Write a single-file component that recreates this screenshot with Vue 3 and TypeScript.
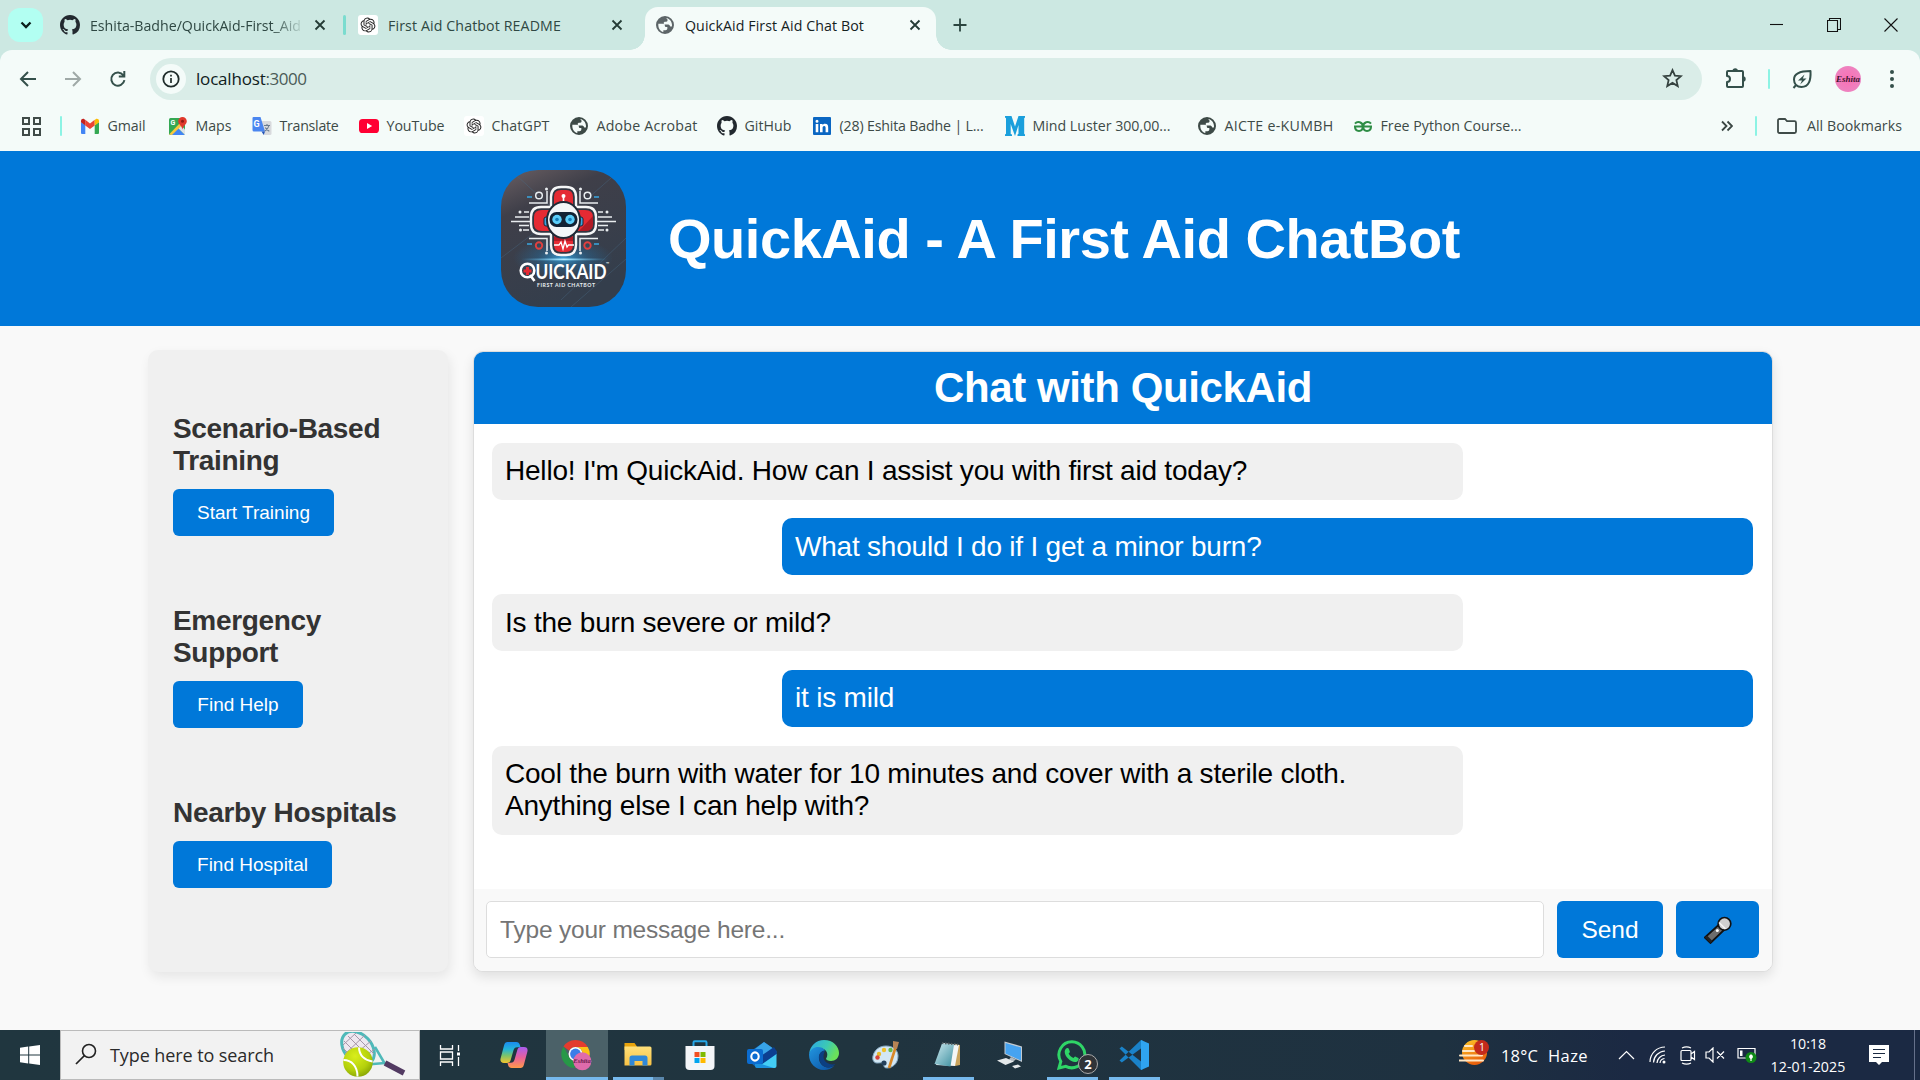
<script setup lang="ts">
import type { Directive } from 'vue'

interface Bookmark { label: string; icon: string; slot: number; text: number; mark?: string }
interface Message { from: 'bot' | 'user'; text: string }
interface Tool { title: string; action: string; wide: number }
interface TaskApp { icon: string; state: '' | 'open' | 'active' | 'stacked' }

// Tracks a label so that it fills the given width.
const vFit: Directive<HTMLElement, number> = {
  mounted(el, binding) {
    const natural = el.getBoundingClientRect().width
    const count = (el.textContent ?? '').trim().length
    if (count > 0) el.style.letterSpacing = `${(binding.value - natural) / count}px`
  },
}

const bookmarks: Bookmark[] = [
  { label: 'Gmail', icon: 'gmail', slot: 88, text: 38 },
  { label: 'Maps', icon: 'maps', slot: 84, text: 36, mark: 'G' },
  { label: 'Translate', icon: 'translate', slot: 107, text: 59, mark: 'G' },
  { label: 'YouTube', icon: 'youtube', slot: 105, text: 58 },
  { label: 'ChatGPT', icon: 'openai', slot: 105, text: 58 },
  { label: 'Adobe Acrobat', icon: 'globe', slot: 148, text: 101 },
  { label: 'GitHub', icon: 'github', slot: 95, text: 47 },
  { label: '(28) Eshita Badhe | L...', icon: 'linkedin', slot: 193, text: 144 },
  { label: 'Mind Luster 300,00...', icon: 'mind', slot: 192, text: 138 },
  { label: 'AICTE e-KUMBH', icon: 'globe', slot: 156, text: 109 },
  { label: 'Free Python Course...', icon: 'gfg', slot: 180, text: 141 },
]

const tools: Tool[] = [
  { title: 'Scenario-Based Training', action: 'Start Training', wide: 161 },
  { title: 'Emergency Support', action: 'Find Help', wide: 130 },
  { title: 'Nearby Hospitals', action: 'Find Hospital', wide: 159 },
]

const messages: Message[] = [
  { from: 'bot', text: "Hello! I'm QuickAid. How can I assist you with first aid today?" },
  { from: 'user', text: 'What should I do if I get a minor burn?' },
  { from: 'bot', text: 'Is the burn severe or mild?' },
  { from: 'user', text: 'it is mild' },
  { from: 'bot', text: 'Cool the burn with water for 10 minutes and cover with a sterile cloth. Anything else I can help with?' },
]

const apps: TaskApp[] = [
  { icon: 'taskview', state: '' },
  { icon: 'copilot', state: '' },
  { icon: 'chrome', state: 'active' },
  { icon: 'explorer', state: 'stacked' },
  { icon: 'store', state: '' },
  { icon: 'outlook', state: '' },
  { icon: 'edge', state: '' },
  { icon: 'paint', state: '' },
  { icon: 'notepad', state: 'open' },
  { icon: 'pc', state: '' },
  { icon: 'whatsapp', state: 'open' },
  { icon: 'vscode', state: 'open' },
]
</script>

<template>
  <div class="screen">
    <svg class="defs" width="0" height="0" aria-hidden="true">
      <defs>
        <linearGradient id="g-logo" x1="0" y1="0" x2=".4" y2="1"><stop offset="0" stop-color="#6a5f63" /><stop offset=".3" stop-color="#3f3f49" /><stop offset="1" stop-color="#343e4c" /></linearGradient>
        <radialGradient id="g-glow"><stop offset="0" stop-color="#39b4f5" stop-opacity=".8" /><stop offset=".5" stop-color="#1f79b5" stop-opacity=".35" /><stop offset="1" stop-color="#1f79b5" stop-opacity="0" /></radialGradient>
        <linearGradient id="g-line"><stop offset="0" stop-color="#4fc3ff" stop-opacity="0" /><stop offset=".5" stop-color="#b5ecff" /><stop offset="1" stop-color="#4fc3ff" stop-opacity="0" /></linearGradient>
        <linearGradient id="g-cpa" x1="0" y1="0" x2="0" y2="1"><stop offset="0" stop-color="#1a8af0" /><stop offset=".35" stop-color="#23b5d8" /><stop offset=".65" stop-color="#7cc46a" /><stop offset="1" stop-color="#f5c52c" /></linearGradient>
        <linearGradient id="g-cpb" x1="0" y1="0" x2="0" y2="1"><stop offset="0" stop-color="#a85cf0" /><stop offset=".5" stop-color="#e8609a" /><stop offset="1" stop-color="#ff9a4a" /></linearGradient>
        <linearGradient id="g-edge" x1="0" y1="0" x2="1" y2=".4"><stop offset="0" stop-color="#2aa5e8" /><stop offset=".6" stop-color="#3cc9b4" /><stop offset="1" stop-color="#6be05a" /></linearGradient>
        <linearGradient id="g-edge2" x1="0" y1="0" x2="1" y2="1"><stop offset="0" stop-color="#2196e0" /><stop offset="1" stop-color="#0b4fa0" /></linearGradient>
        <linearGradient id="g-sun" x1="0" y1="0" x2=".4" y2="1"><stop offset="0" stop-color="#ffc928" /><stop offset="1" stop-color="#e8600c" /></linearGradient>
        <linearGradient id="g-folder" x1="0" y1="0" x2="0" y2="1"><stop offset="0" stop-color="#ffe07a" /><stop offset="1" stop-color="#f8c244" /></linearGradient>
        <radialGradient id="g-ball" cx=".4" cy=".3" r=".8"><stop offset="0" stop-color="#d9ee1c" /><stop offset=".6" stop-color="#b4d00c" /><stop offset="1" stop-color="#7c9a04" /></radialGradient>
        <linearGradient id="g-note" x1="0" y1="0" x2="1" y2="1"><stop offset="0" stop-color="#cdeaf0" /><stop offset="1" stop-color="#3d8f9f" /></linearGradient>
      </defs>

      <symbol id="i-github" viewBox="0 0 16 16"><path fill="#22292f" d="M8 0C3.58 0 0 3.58 0 8c0 3.54 2.29 6.53 5.47 7.59.4.07.55-.17.55-.38 0-.19-.01-.82-.01-1.49-2.01.37-2.53-.49-2.69-.94-.09-.23-.48-.94-.82-1.13-.28-.15-.68-.52-.01-.53.63-.01 1.08.58 1.23.82.72 1.21 1.87.87 2.33.66.07-.52.28-.87.51-1.07-1.78-.2-3.64-.89-3.64-3.95 0-.87.31-1.59.82-2.15-.08-.2-.36-1.02.08-2.12 0 0 .67-.21 2.2.82a7.6 7.6 0 0 1 4 0c1.53-1.04 2.2-.82 2.2-.82.44 1.1.16 1.92.08 2.12.51.56.82 1.27.82 2.15 0 3.07-1.87 3.75-3.65 3.95.29.25.54.73.54 1.48 0 1.07-.01 1.93-.01 2.2 0 .21.15.46.55.38A8.01 8.01 0 0 0 16 8c0-4.42-3.58-8-8-8z" /></symbol>
      <symbol id="i-openai" viewBox="0 0 20 20"><rect width="20" height="20" rx="3" fill="#fff" /><g transform="translate(2.6 2.6) scale(.617)"><path fill="#222" d="M22.28 9.82a5.98 5.98 0 0 0-.51-4.91 6.05 6.05 0 0 0-6.51-2.9A6.07 6.07 0 0 0 4.98 4.18a5.98 5.98 0 0 0-4 2.9 6.05 6.05 0 0 0 .74 7.1 5.98 5.98 0 0 0 .51 4.91 6.05 6.05 0 0 0 6.52 2.9A5.98 5.98 0 0 0 13.26 24a6.06 6.06 0 0 0 5.77-4.21 5.99 5.99 0 0 0 4-2.9 6.06 6.06 0 0 0-.75-7.07zm-9.02 12.61a4.48 4.48 0 0 1-2.88-1.04l.14-.08 4.78-2.76a.8.8 0 0 0 .39-.68v-6.74l2.02 1.17a.07.07 0 0 1 .04.05v5.58a4.5 4.5 0 0 1-4.49 4.5zM3.6 18.3a4.47 4.47 0 0 1-.53-3.01l.14.09 4.78 2.76a.77.77 0 0 0 .78 0l5.84-3.37v2.33a.08.08 0 0 1-.03.06L9.74 19.95a4.5 4.5 0 0 1-6.14-1.65zM2.34 7.9a4.49 4.49 0 0 1 2.37-1.98v5.68a.77.77 0 0 0 .39.68l5.81 3.35-2.02 1.17a.08.08 0 0 1-.07 0L4 14.01A4.5 4.5 0 0 1 2.34 7.9zm16.6 3.86-5.84-3.39 2.02-1.16a.08.08 0 0 1 .07 0l4.83 2.79a4.49 4.49 0 0 1-.68 8.1v-5.68a.79.79 0 0 0-.4-.66zm2.01-3.03-.14-.08-4.77-2.78a.78.78 0 0 0-.79 0L9.41 9.23V6.9a.07.07 0 0 1 .03-.06l4.83-2.79a4.5 4.5 0 0 1 6.68 4.66zM8.3 12.86l-2.02-1.16a.08.08 0 0 1-.03-.06V6.07a4.5 4.5 0 0 1 7.37-3.45l-.14.08-4.78 2.76a.8.8 0 0 0-.39.68zm1.1-2.36 2.6-1.5 2.61 1.5v3l-2.6 1.5-2.61-1.5z" /></g></symbol>
      <symbol id="i-globe" viewBox="0 0 24 24"><path fill="currentColor" fill-rule="evenodd" d="M12 1.2a10.8 10.8 0 1 0 0 21.6 10.8 10.8 0 0 0 0-21.6zM4 10.5h5.2c1.8 0 2.6.9 2.6 2.3 0 1.1.7 1.6 1.8 1.6h1.2v1.8c0 1.4-1 2-2.2 2H10v2.2C6.1 19.600 3.700 16 4 10.500zm9.400-7c3.700.6 7 4 7 8.500 0 .7-.1 1.200-.2 1.700h-1.900c-.7-1.500-1.500-2.200-3.300-2.200h-2.700c-1.200 0-1.900-.7-1.900-1.700 0-1.200.8-1.800 1.900-1.800h1.300c.9 0 1.400-.5 1.400-1.400V5.500z" /></symbol>
      <symbol id="i-gmail" viewBox="0 0 20 20"><path fill="#4285f4" d="M1 17V6l4.300 3.200V18H2a1 1 0 0 1-1-1z" /><path fill="#34a853" d="M19 17V6l-4.300 3.200V18H18a1 1 0 0 0 1-1z" /><path fill="#ea4335" d="M5.300 9.400V3.800L10 7.400l4.700-3.600v5.600L10 13z" /><path fill="#c5221f" d="M1 4.900C1 3 3 2.200 4.400 3.200l.9.7v5.500L1 6.200z" /><path fill="#fbbc04" d="M19 4.900c0-1.900-2-2.700-3.400-1.700l-.9.7v5.500L19 6.200z" /></symbol>
      <symbol id="i-maps" viewBox="0 0 20 20"><rect x="1" y="2" width="16" height="17" rx="1.500" fill="#34a853" /><path d="M2 19 9.500 11.500 17 19z" fill="#4285f4" /><path d="m9.500 11.500 3-3 4.500 5V19z" fill="#dfe3e6" /><path d="M1 18.500 13 6l2 2.200L4 19z" fill="#f8c93c" /><path d="M14.500 1a4.300 4.300 0 0 0-4.300 4.300c0 3.200 3.300 3.800 4.300 8.200 1-4.400 4.300-5 4.300-8.200A4.300 4.300 0 0 0 14.500 1z" fill="#e0392c" /><circle cx="14.500" cy="5.300" r="1.500" fill="#8d1a13" /></symbol>
      <symbol id="i-translate" viewBox="0 0 20 20"><path d="M8 5h10a1.500 1.500 0 0 1 1.500 1.500v11A1.500 1.500 0 0 1 18 19h-6z" fill="#d8dadd" /><path d="M1.500 1h7L13 15.500H2A1.500 1.500 0 0 1 .5 14V2a1 1 0 0 1 1-1z" fill="#4a86f0" /><path d="m9.500 15.500 3.500 0-1.300 3.500z" fill="#2456b8" /><path d="M12 9.500h6M15 8v1.500M17 9.500c-.6 2.600-2.200 4.300-4.200 5.500M13.300 11.500c.9 1.800 2.200 3 4 3.800" stroke="#6a7c90" stroke-width="1.100" fill="none" /></symbol>
      <symbol id="i-youtube" viewBox="0 0 20 20"><rect y="3" width="20" height="14" rx="3.600" fill="#ff0033" /><path d="m8 7 5.200 3L8 13z" fill="#fff" /></symbol>
      <symbol id="i-linkedin" viewBox="0 0 20 20"><rect x="1" y="1" width="18" height="18" rx="1" fill="#0a66c2" /><path fill="#fff" d="M3.700 8h2.600v8.200H3.700zM5 3.800a1.500 1.500 0 1 1 0 3 1.500 1.500 0 0 1 0-3zM8 8h2.500v1.100c.4-.7 1.300-1.300 2.500-1.300 2.600 0 3.200 1.600 3.200 3.900v4.500h-2.600v-4c0-1 0-2.200-1.400-2.200s-1.600 1-1.600 2.100v4.100H8z" /></symbol>
      <symbol id="i-mind" viewBox="0 0 20 20"><path fill="#1a9fdc" d="M0 0h6.500L10 10.500 13.500 0H20v1.500l-.8.700v15.600l.8.700V20h-7.500v-1.500l1-.7V9L10 20 5.700 8v10l1.300.5V20H0v-1.500l1-.7V2.200L0 1.500z" /></symbol>
      <symbol id="i-gfg" viewBox="0 0 20 20"><g fill="none" stroke="#2f8d46" stroke-width="2"><path d="M1 10.600h8.800c0 3-1.400 4.400-3.800 4.400S2 13.500 2 10.600M2 7.700C3.200 6.200 5 5.800 6.800 6.300c2 .6 3 2.200 3 4.300" /><path d="M19 10.600h-8.800c0 3 1.400 4.400 3.800 4.400s4-1.500 4-4.400M18 7.700c-1.200-1.500-3-1.900-4.800-1.400-2 .6-3 2.200-3 4.300" /></g></symbol>

      <symbol id="t-taskview" viewBox="0 0 30 30"><g fill="none" stroke="#fff" stroke-width="1.300"><path d="M5.500 5v4h12V5M5.500 26v-4h12v4M5.500 12h12v7h-12zM23.500 5v6M23.500 17v9" /></g><path fill="#fff" d="M22 12.500h3v3h-3z" /></symbol>
      <symbol id="t-copilot" viewBox="0 0 30 30"><path fill="url(#g-cpa)" d="M8.500 2h8.800c2 0 3 1 3.600 3l.6 2.200h-3.400c-2 0-3 1-3.600 3L11.700 20c-.6 2-1.600 3-3.600 3H5c-3 0-4.200-2-3.300-5L5.100 5.200C5.700 3 6.800 2 8.500 2z" /><path fill="url(#g-cpb)" d="M21.500 28h-8.800c-2 0-3-1-3.600-3l-.6-2.200h3.400c2 0 3-1 3.600-3L18.300 10c.6-2 1.600-3 3.600-3H25c3 0 4.200 2 3.300 5l-3.400 12.800c-.6 2.200-1.700 3.200-3.400 3.200z" /></symbol>
      <symbol id="t-chrome" viewBox="0 0 34 34"><path fill="#e33b2e" d="M16 1a14.500 14.500 0 0 1 12.600 7.200H16a7.300 7.300 0 0 0-6.400 3.800L3.600 7.700A14.500 14.500 0 0 1 16 1z" /><path fill="#fbc116" d="M28.600 8.200A14.500 14.500 0 0 1 16 30l6.300-10.900A7.300 7.300 0 0 0 16 8.200z" /><path fill="#279847" d="M3.600 7.700 9.700 19a7.300 7.300 0 0 0 8.300 3.800L14.500 30A14.500 14.500 0 0 1 3.600 7.700z" /><circle cx="16" cy="15.500" r="7.200" fill="#fff" /><circle cx="16" cy="15.500" r="5.600" fill="#3b7de8" /><circle cx="23" cy="23" r="9.300" fill="#df6bab" /></symbol>
      <symbol id="t-explorer" viewBox="0 0 30 30"><path fill="#e8a30c" d="M1.500 3h10l2.500 3.500V10H1.500z" /><path fill="url(#g-folder)" d="M1.500 6.500H27q1.500 0 1.500 1.500v16q0 1.500-1.500 1.500H1.500z" /><path fill="#2f88d8" d="M6.500 25.500V18q0-2.500 2.500-2.500h13q2.500 0 2.500 2.500v7.500h-5V21h-8v4.500z" /></symbol>
      <symbol id="t-store" viewBox="0 0 30 30"><path d="M8.500 8V2.500q0-1.300 1.300-1.300h10.400q1.300 0 1.300 1.300V8" fill="none" stroke="#27a7e8" stroke-width="2" /><path d="M.5 6h29v20a4 4 0 0 1-4 4h-21a4 4 0 0 1-4-4z" fill="#f3f5f8" /><path fill="#f25022" d="M9.500 12h5v5h-5z" /><path fill="#7fba00" d="M15.500 12h5v5h-5z" /><path fill="#00a4ef" d="M9.500 18h5v5h-5z" /><path fill="#ffb900" d="M15.500 18h5v5h-5z" /></symbol>
      <symbol id="t-outlook" viewBox="0 0 30 30"><path fill="#1267b8" d="M4 11 17 2l12.500 9v4L10 28l-6-5z" /><path fill="#38a4e8" d="m8 9 9-7 10 7-14 8z" /><path fill="#0c3f91" d="m27 7 2.500 4v4L10 27l-2-7z" /><path fill="#43cdf5" d="M29.500 14v12a2 2 0 0 1-2 2H9.500z" /><path fill="#1b91dd" d="M8 22v4q0 2 2 2h17z" /><rect y="9" width="16" height="15" rx="2" fill="#0b6cd0" /><ellipse cx="8" cy="16.500" rx="3.700" ry="4.100" fill="none" stroke="#fff" stroke-width="2.100" /></symbol>
      <symbol id="t-edge" viewBox="0 0 30 30"><path fill="url(#g-edge)" d="M.2 13.500C1 6 7 0 15 0c9 0 15 6.300 15 13 0 5-3.800 8-8 8-3 0-5-1.200-5-2.200 0-.8 1.300-1.500 1.300-4.300 0-3.700-3.300-6.300-7.300-6.300C5.500 8.200 2 11 .2 13.500z" /><path fill="url(#g-edge2)" d="M.1 13.800C1.500 9.500 5 7 9 7c3 0 5.500 1 7.200 3.500-4.700.3-6.700 4.500-6.200 8.500.5 4.700 4.500 8.500 9 8.500 2 0 4-.5 6.500-2C23 28.500 19 30 15 30 6 30-.6 22.500.1 13.800z" /><path fill="#0c3f82" d="M10 18c.4 5 4.500 9.500 9 9.500 2.500 0 5-1 7.500-3.500-3 1-6 .5-9-1.500-2-1.500-3-3.500-3-6 0-2 .5-3.500 1.700-6-4 .3-6.600 3.500-6.200 7.500z" /></symbol>
      <symbol id="t-paint" viewBox="0 0 30 30"><path fill="#d3e7f4" stroke="#86a9c2" d="M15 6c7 0 12 4 12 10 0 8-6 12-11 12-3 0-3-2-4-4s-3-1-6-1-5-3-4-7C3.500 10 8 6 15 6z" /><circle cx="8" cy="14" r="2.200" fill="#e8b828" /><circle cx="13" cy="10" r="2.200" fill="#f0c02c" /><circle cx="19.500" cy="10" r="2.200" fill="#6ab84a" /><circle cx="6.500" cy="17.500" r="2.200" fill="#d8443a" /><circle cx="13" cy="23" r="2.600" fill="#24405c" /><path d="m25 6-7 22" stroke="#d88828" stroke-width="2.600" /><path d="m22 1 6 1-2 7-4-1z" fill="#b88455" /></symbol>
      <symbol id="t-notepad" viewBox="0 0 30 30"><path fill="#c9a35c" d="m22 4 5 1v20l-5 1z" /><path fill="#f4f6f6" d="M10 3 26 5l-4 21-19-1z" /><path fill="url(#g-note)" d="M9 3.500 21 4.500l-3.500 22L1.500 24z" /><path d="m9 3 16 1.500" stroke="#4d5b60" stroke-width="2" stroke-dasharray="1.500 1.500" /></symbol>
      <symbol id="t-pc" viewBox="0 0 30 30"><path fill="#c3cad0" d="M9.500 1.500 27 6.500v15.500L9.500 14z" /><path fill="#46a3f0" d="m10.500 3 15.500 4.500V20.500l-15.500-7z" /><path fill="#b2bac0" d="m16 17 5 2.500-3 2-4-2z" /><path fill="#e4e8ea" d="m2 20.500 9-2.500 8 3.500-8.500 3.500zM17 26l6-1.500 3 2-6 2z" /></symbol>
      <symbol id="t-whatsapp" viewBox="0 0 30 30"><path fill="none" stroke="#2fd567" stroke-width="3" d="M15 1.800A13 13 0 0 0 3.800 21.500L2 28l6.800-1.700A13 13 0 1 0 15 1.800z" /><path fill="#2fd567" d="M10.500 8c.6 0 1 .1 1.300.8l1 2.600c.2.500-.1 1-1.200 2.200 1 2 2.800 3.600 5 4.500 1-1.200 1.300-1.700 2-1.400l2.700 1.300c.7.300.5 3-1.900 3.900-4.500 1.500-12-5-11.700-10.300.1-2 1.500-3.600 2.800-3.600z" /></symbol>
      <symbol id="t-vscode" viewBox="0 0 30 30"><path fill="#1a82c8" d="m.5 8.500 2.300-2L24 23v6l-2 1zM.5 20.500l2.300 2L24 7V1l-2-1z" /><path fill="#2fa4f0" d="M22 0 30 3.500v23L22 30z" /></symbol>
    </svg>

    <header class="browser">
      <div class="tabstrip">
        <button class="tabsearch" aria-label="Search tabs"><svg width="12" height="8" viewBox="0 0 12 8"><path d="m1.500 1.500 4.500 4.500 4.500-4.500" fill="none" stroke="#0b1f1b" stroke-width="2.300" /></svg></button>
        <div class="tab first">
          <svg class="i20"><use href="#i-github" /></svg>
          <span class="clip"><span v-fit="211">Eshita-Badhe/QuickAid-First_Aid</span></span>
          <svg class="x" viewBox="0 0 10 10"><path d="m.5.5 9 9m0-9-9 9" /></svg>
        </div>
        <i class="tabsep"></i>
        <div class="tab second">
          <svg class="i20"><use href="#i-openai" /></svg>
          <span v-fit="173">First Aid Chatbot README</span>
          <svg class="x" viewBox="0 0 10 10"><path d="m.5.5 9 9m0-9-9 9" /></svg>
        </div>
        <div class="tab current">
          <svg class="i20"><use href="#i-globe" /></svg>
          <span v-fit="179">QuickAid First Aid Chat Bot</span>
          <svg class="x" viewBox="0 0 10 10"><path d="m.5.5 9 9m0-9-9 9" /></svg>
        </div>
        <svg class="plus" viewBox="0 0 14 14"><path d="M7 .5v13M.5 7h13" /></svg>
        <div class="winctl">
          <svg viewBox="0 0 14 14"><path d="M0 6.500h13" /></svg>
          <svg viewBox="0 0 14 14"><path d="M.5 2.500h10v11H.5zM2.500 2.500v-2h11v11h-3" /></svg>
          <svg viewBox="0 0 14 14"><path d="m.5.5 13 13m0-13-13 13" /></svg>
        </div>
      </div>

      <div class="toolbar">
        <div class="nav">
          <svg viewBox="0 0 18 18"><path d="M17 9H2m7-7L2 9l7 7" /></svg>
          <svg class="dim" viewBox="0 0 18 18"><path d="M1 9h15M9 2l7 7-7 7" /></svg>
          <svg viewBox="0 0 18 18"><path d="M14.300 5.300A6.600 6.600 0 1 0 15.400 10.200M15.300 1v5.500H9.800" /></svg>
        </div>
        <div class="omnibox">
          <span class="info"><svg width="18" height="18" viewBox="0 0 18 18"><circle cx="9" cy="9" r="7.700" fill="none" stroke="#1f2c2a" stroke-width="1.800" /><path d="M9 8v5M9 4.700v1.700" stroke="#1f2c2a" stroke-width="1.700" /></svg></span>
          <span class="url"><span v-fit="69.500">localhost</span><span v-fit="41" class="port">:3000</span></span>
          <svg class="star" viewBox="0 0 20 20"><path d="m10 2 2.300 5.300 5.700.5-4.300 3.800 1.300 5.600-5-3-5 3 1.300-5.600L2 7.800l5.700-.5z" fill="none" stroke="#35423f" stroke-width="1.700" /></svg>
        </div>
        <svg class="ext" viewBox="0 0 22 22"><path d="M3 4h14q1 0 1 1v14q0 1-1 1H3q-1 0-1-1v-4c4 0 4-6 0-6V5q0-1 1-1z" fill="none" stroke="#34504b" stroke-width="2" stroke-linejoin="round" /><path d="M7.500 4a2.700 2.700 0 0 1 5.400 0zM18 9.300a2.700 2.700 0 0 1 0 5.400z" fill="#34504b" /></svg>
        <i class="bar"></i>
        <svg class="leaf" viewBox="0 0 20 20"><path d="M18.500 2c.5 9-1.500 16-9 16-4.500 0-7.500-3-7.500-7.500C2 4 8 2 18.500 2zM4.500 15.500 1.500 19" fill="none" stroke="#34504b" stroke-width="2" stroke-linejoin="round" /><path d="m12.500 5.500-6.500 6h4l-1.800 4 6.300-6h-3.700z" fill="#34504b" /></svg>
        <span class="avatar">Eshita</span>
        <svg class="dots" viewBox="0 0 6 22"><circle cx="3" cy="4" r="2" /><circle cx="3" cy="11" r="2" /><circle cx="3" cy="18" r="2" /></svg>
      </div>

      <div class="bookmarks">
        <svg class="gridicon" viewBox="0 0 19 19"><path d="M1 1h6v6H1zM12 1h6v6h-6zM1 12h6v6H1zM12 12h6v6h-6z" fill="none" stroke="#404b48" stroke-width="2" /></svg>
        <i class="bar thick"></i>
        <div v-for="b in bookmarks" :key="b.label" class="bm" :style="{ width: b.slot + 'px' }">
          <svg class="i20"><use :href="'#i-' + b.icon" /></svg>
          <b v-if="b.mark" class="mark" :class="b.icon">{{ b.mark }}</b>
          <span v-fit="b.text">{{ b.label }}</span>
        </div>
        <svg class="more" viewBox="0 0 12 12"><path d="m1 1.500 4.500 4.500L1 10.500M6.500 1.500 11 6l-4.500 4.500" fill="none" stroke="#3a4643" stroke-width="1.800" /></svg>
        <i class="bar thick"></i>
        <svg class="folder" viewBox="0 0 20 16"><path d="M1 2.500Q1 1 2.500 1H8l2 2.200h7.500Q19 3.200 19 4.700v8.800q0 1.500-1.500 1.500h-15Q1 15 1 13.500z" fill="none" stroke="#3f4b48" stroke-width="1.800" /></svg>
        <span v-fit="95">All Bookmarks</span>
      </div>
    </header>

    <section class="hero">
      <svg class="logo" viewBox="0 0 125 137" role="img">
        <clipPath id="c-logo"><rect width="125" height="137" rx="37" /></clipPath>
        <g clip-path="url(#c-logo)">
          <rect width="125" height="137" fill="url(#g-logo)" />
          <path d="M0 88 50 50M60 130l65-62M70 137l55-48M85 30 110 8M15 5l35 32" stroke="#4a6d88" stroke-width=".7" opacity=".55" />
          <ellipse cx="62" cy="88" rx="50" ry="20" fill="url(#g-glow)" />
          <g fill="none" stroke="#e9edf0" stroke-width="1.500">
            <path d="M28 33h18V21M97 33H79V21M28 68.500h18V81M97 68.500H79V81" />
            <path d="M14 47h14M10 51.500h20M18 55.500h10M22 60h6M23 42h5M97 47h14M95 51.500h20M97 55.500h10M97 60h6M97 42h5" />
            <circle cx="38" cy="25.500" r="3.300" /><circle cx="86.500" cy="25.500" r="3.300" />
          </g>
          <g fill="#e9edf0"><circle cx="45.500" cy="19" r="1.500" /><circle cx="79.500" cy="19" r="1.500" /><circle cx="45.500" cy="83" r="1.500" /><circle cx="79.500" cy="83" r="1.500" /><circle cx="19" cy="42" r="1.500" /><circle cx="19.500" cy="60" r="1.500" /><circle cx="106" cy="42" r="1.500" /><circle cx="106" cy="60" r="1.500" /></g>
          <path d="M26 27h5M93 27h5M26 74h5M93 74h5" stroke="#3aa6e0" stroke-width="1.600" />
          <circle cx="38" cy="75.500" r="3.200" fill="none" stroke="#e0403f" stroke-width="1.900" /><circle cx="86.500" cy="75.500" r="3.200" fill="none" stroke="#e0403f" stroke-width="1.900" />
          <path d="M60 17h5q10 0 10 10v10h10q10 0 10 10v7q0 10-10 10H75v11q0 10-10 10h-5q-10 0-10-10V64H40q-10 0-10-10v-7q0-10 10-10h10V27q0-10 10-10z" fill="#303642" stroke="#f5f6f7" stroke-width="2.400" />
          <path d="M60 20h5q7 0 7 7v13h12q8 0 8 7v7q0 7-8 7H72v14q0 7-7 7h-5q-7 0-7-7V61H41q-8 0-8-7v-7q0-7 8-7h12V27q0-7 7-7z" fill="#e52a33" />
          <path d="M78 61h7q7 0 7-7v-8zM53 67h19v4H53z" fill="#9d1522" opacity=".75" />
          <path d="M62.500 34v-8" stroke="#fff" stroke-width="1.600" /><circle cx="62.500" cy="26" r="2" fill="#fff" />
          <rect x="43" y="47" width="5" height="9" rx="2" fill="#3fa3dd" stroke="#17283a" /><rect x="77" y="47" width="5" height="9" rx="2" fill="#3fa3dd" stroke="#17283a" />
          <ellipse cx="62.500" cy="50" rx="17.500" ry="19" fill="#202936" />
          <ellipse cx="62.500" cy="50" rx="15.500" ry="17" fill="#f4f6f8" />
          <rect x="48.500" y="42" width="28" height="15" rx="7" fill="#132234" />
          <circle cx="56" cy="49.500" r="4.700" fill="#5ccdf8" /><circle cx="69" cy="49.500" r="4.700" fill="#5ccdf8" /><circle cx="56" cy="49.500" r="1.800" fill="#167fba" /><circle cx="69" cy="49.500" r="1.800" fill="#167fba" />
          <path d="M53 75h5l2-3 2 7 2-8 2 6 1.500-2H73" fill="none" stroke="#fff" stroke-width="1.300" />
          <rect x="20" y="88.500" width="86" height="1.800" fill="url(#g-line)" />
          <circle cx="26.500" cy="100.500" r="6.800" fill="none" stroke="#fff" stroke-width="2.600" /><path d="m29 105 4.500 6" stroke="#fff" stroke-width="2.600" /><path d="M26.500 97v8M22.500 101h8" stroke="#e52a33" stroke-width="3" />
          <text x="34.500" y="109" textLength="71" lengthAdjust="spacingAndGlyphs" class="brand">UICKAID</text>
          <text x="105" y="95" class="tm">™</text>
          <text x="36" y="116.500" textLength="58" class="tag">FIRST AID CHATBOT</text>
        </g>
      </svg>
      <h1><span v-fit="792">QuickAid - A First Aid ChatBot</span></h1>
    </section>

    <main class="page">
      <aside class="side">
        <section v-for="t in tools" :key="t.title" class="tool">
          <h3>{{ t.title }}</h3>
          <button :style="{ width: t.wide + 'px' }">{{ t.action }}</button>
        </section>
      </aside>

      <section class="chat">
        <h2><span v-fit="378">Chat with QuickAid</span></h2>
        <div class="log">
          <p v-for="(m, i) in messages" :key="i" class="msg" :class="m.from">{{ m.text }}</p>
        </div>
        <div class="compose">
          <input type="text" placeholder="Type your message here..." />
          <button class="send">Send</button>
          <button class="mic" aria-label="Voice input">
            <svg width="28" height="28" viewBox="0 0 28 28"><path d="M14 9.500 19.500 14.500 6.500 27 .8 21.500z" fill="#6d6d6d" stroke="#111" stroke-width="1.800" /><path d="m3 19.500 5.500 5.500-2 2L.8 21.500z" fill="#222" /><circle cx="20.500" cy="7.800" r="6.300" fill="#cfcfcf" stroke="#111" stroke-width="1.700" /><path d="m15 6.500 6.500 6.500" stroke="#f4f4f4" stroke-width="1.600" /><circle cx="13.300" cy="14.500" r="1.500" fill="#fff" /></svg>
          </button>
        </div>
      </section>
    </main>

    <footer class="taskbar">
      <div class="start"><svg width="20" height="20" viewBox="0 0 20 20" fill="#fff"><path d="M0 2.800 8.200 1.600v7.900H0zM9.200 1.500 20 0v9.500H9.200zM0 10.500h8.200v7.900L0 17.200zM9.200 10.500H20V20L9.200 18.500z" /></svg></div>
      <div class="search">
        <svg class="glass" viewBox="0 0 22 22"><circle cx="14" cy="8" r="6.500" fill="none" stroke="#222" stroke-width="1.600" /><path d="m9.500 12.500-8.500 8.500" stroke="#222" stroke-width="1.700" /></svg>
        <span v-fit="164">Type here to search</span>
        <svg class="racket" viewBox="0 0 68 46">
          <ellipse cx="19" cy="16" rx="13.500" ry="19" transform="rotate(-43 19 16)" fill="#eee8f0" stroke="#4fb9b9" stroke-width="3" />
          <path d="m5 9 22 22M9 4l23 23M15 2l20 20M4 16l14 14M6 22 26 3M9 28 32 9M14 32 36 17M4 13 17 1" stroke="#a596a8" stroke-width="1" />
          <path d="M36 15 46 32M22 33l24-2" stroke="#4fb9b9" stroke-width="2.500" /><path d="m46 31 19 10" stroke="#523a62" stroke-width="5.500" />
          <circle cx="19" cy="30" r="14.800" fill="url(#g-ball)" /><path d="M20 15.500c0 8 6 13 13.500 14M4.500 28c8 0 14 6 14 16.500" fill="none" stroke="#fff" stroke-width="2" />
        </svg>
      </div>
      <div class="apps">
        <div v-for="a in apps" :key="a.icon" class="app" :class="a.state">
          <svg width="30" height="30"><use :href="'#t-' + a.icon" /></svg>
          <b v-if="a.icon === 'whatsapp'" class="count">2</b>
          <i v-if="a.icon === 'chrome'" class="who">Eshita</i>
        </div>
      </div>
      <div class="tray">
        <svg class="sun" viewBox="0 0 30 26"><circle cx="15.500" cy="12.500" r="12.500" fill="url(#g-sun)" /><path d="M6 6h7M4 11h11M1 15.500h22M0 20.500h24" stroke="#ffe6c4" stroke-width="2" stroke-linecap="round" /><circle cx="22.500" cy="7.500" r="7.500" fill="#c42b1c" /><text x="20" y="11.300" font-size="10.500" font-family="Open Sans, sans-serif" fill="#fff">1</text></svg>
        <span class="deg"><span v-fit="37">18°C</span></span>
        <span class="sky"><span v-fit="40">Haze</span></span>
        <svg class="chev" viewBox="0 0 17 10"><path d="m1 9 7.500-7.500L16 9" /></svg>
        <svg class="wifi" viewBox="0 0 17 18"><path d="M1 16A15 15 0 0 1 16 1M4.500 16.500A12 12 0 0 1 16 5M8 17A8.500 8.500 0 0 1 16 9M11 17a5 5 0 0 1 4.500-4.500" /><circle cx="15" cy="16" r="1.500" fill="#fff" stroke="none" /></svg>
        <svg class="meet" viewBox="0 0 16 19"><path d="M2 4.500h8q1 0 1 1v8q0 1-1 1H2q-1 0-1-1v-8q0-1 1-1zM11 8l3.500-2.500v8L11 11M2 2q4.500-2.400 9 0M2 17q4.500 2.400 9 0" /></svg>
        <svg class="vol" viewBox="0 0 20 16"><path d="M1 5h3l4-4v14l-4-4H1zM12 4.500l7 7m0-7-7 7" /></svg>
        <svg class="bat" viewBox="0 0 20 16"><path d="M1 1.500h17v9.500H1z" /><path d="M3 3.500h2.500V9H3z" class="cell" /><circle cx="14" cy="10.500" r="5.500" fill="#0f8a16" stroke="none" /><path d="M14 14v-3" /><path d="M14 12c-2.800-1.200-2.300-3.400 0-4.700 2.300 1.300 2.800 3.500 0 4.700z" class="cell" /></svg>
        <div class="clock"><span v-fit="36">10:18</span><span v-fit="75">12-01-2025</span></div>
        <svg class="note" viewBox="0 0 20 20"><path d="M0 0h20v17h-7l-3 3-3-3H0z" fill="#fff" /><path d="M4 4.500h12M4 8.500h12M4 12.500h8" stroke="#1b2a42" stroke-width="1.300" /></svg>
        <i class="peek"></i>
      </div>
    </footer>
  </div>
</template>

<style>
body { margin: 0; overflow: hidden; }
</style>

<style scoped>
* { box-sizing: border-box; }
.screen { width: 1920px; height: 1080px; display: flex; flex-direction: column; background: #f9f9f9; font-family: "Liberation Sans", Arial, sans-serif; overflow: hidden; position: relative; }
.defs { position: absolute; }
svg { flex: none; display: block; }
span { white-space: nowrap; }
.i20 { width: 20px; height: 20px; }
.browser { height: 151px; flex: none; background: #cce8e2; font: 14.2px/20px "Open Sans", "Noto Sans", sans-serif; color: #3d4a47; }
.tabstrip { height: 50px; display: flex; align-items: center; padding-left: 8px; }
.tabsearch { width: 35px; height: 34px; border: 0; border-radius: 12px; padding: 0; background: #b2fff2; display: grid; place-items: center; }
.tab { display: flex; align-items: center; height: 43px; color: #2f4843; }
.tab > span { padding-top: 1px; }
.tab .x { margin-left: auto; }
.x { width: 10px; height: 10px; overflow: visible; }
.x path { fill: none; stroke: #243b36; stroke-width: 1.800; }
.tab .i20 { margin-right: 10px; }
.first { margin-left: 17px; width: 265px; }
.clip { width: 212px; mask-image: linear-gradient(90deg, #000 86%, rgba(0, 0, 0, .1)); }
.tabsep { width: 3px; height: 20px; margin: 0 12px 0 18px; background: #7bdccf; border-radius: 2px; }
.second { width: 264px; }
.current { position: relative; align-self: flex-end; width: 291px; height: 43px; margin-left: 23px; padding: 0 16px 7px 10px; background: #f4fbf9; border-radius: 13px 13px 0 0; color: #14211e; }
.current .i20 { color: #5d6568; }
.current::before, .current::after { content: ""; position: absolute; bottom: 0; width: 15px; height: 15px; }
.current::before { left: -15px; background: radial-gradient(circle at 0 0, transparent 14.500px, #f4fbf9 15px); }
.current::after { right: -15px; background: radial-gradient(circle at 100% 0, transparent 14.500px, #f4fbf9 15px); }
.plus { width: 14px; height: 14px; margin-left: 17px; }
.plus path { stroke: #2b453f; stroke-width: 1.800; }
.winctl { display: flex; gap: 43px; margin-left: auto; margin-right: 22px; }
.winctl svg { width: 14px; height: 14px; }
.winctl path { fill: none; stroke: #111; stroke-width: 1.100; }
.toolbar { height: 57px; display: flex; align-items: center; background: #f4fbf9; border-radius: 12px 12px 0 0; padding-left: 19px; }
.nav { display: flex; gap: 27px; width: 131px; }
.nav svg { width: 18px; height: 18px; }
.nav path { fill: none; stroke: #34504b; stroke-width: 2; }
.nav .dim path { stroke: #9fa9a7; }
.omnibox { width: 1552px; height: 42px; border-radius: 21px; background: #daede8; display: flex; align-items: center; padding: 0 19px 0 6px; }
.info { width: 30px; height: 30px; border-radius: 50%; background: #f4fbf9; display: grid; place-items: center; margin-right: 10px; }
.url { font-size: 17px; line-height: 24px; color: #10201c; display: flex; padding-top: 1px; }
.port { color: #4a5b57; }
.star { width: 21px; height: 21px; margin-left: auto; }
.ext { width: 22px; height: 22px; margin: -2px 0 0 23px; }
.bar { width: 2px; height: 20px; background: #8cf3e4; border-radius: 1px; margin-left: 21px; }
.leaf { width: 20px; height: 20px; margin-left: 22px; }
.avatar { width: 26px; height: 26px; border-radius: 50%; background: radial-gradient(circle, #fb6fb4, #e88bc5); margin-left: 23px; font: italic 700 9px/26px "Liberation Serif", serif; text-align: center; color: #43142e; }
.dots { width: 6px; height: 22px; margin-left: 28px; fill: #34504b; }
.bookmarks { height: 44px; background: #f4fbf9; display: flex; align-items: center; padding: 0 0 6px 22px; }
.gridicon { width: 19px; height: 19px; }
.bookmarks .thick { width: 2.500px; margin: 0 17.500px 0 18.500px; }
.bm { display: flex; align-items: center; gap: 8px; flex: none; position: relative; }
.mark { position: absolute; color: #fff; font-family: Roboto, sans-serif; }
.mark.maps { left: 3px; top: 3px; font-size: 7px; line-height: 8px; }
.mark.translate { left: 2px; top: 3px; font-size: 9px; line-height: 11px; }
.more { width: 12px; height: 12px; margin-left: 188px; }
.bookmarks .more + .thick { margin: 0 20px 0 22px; }
.folder { width: 20px; height: 16px; margin-right: 10px; }
.hero { height: 175px; flex: none; background: #0078d9; display: flex; align-items: center; padding-left: 501px; gap: 42px; color: #fff; }
.logo { width: 125px; height: 137px; }
.brand { font: 700 20px Lato, sans-serif; fill: #fff; }
.tm { font: 700 4px "Open Sans", sans-serif; fill: #fff; }
.tag { font: 700 5.200px Lato, sans-serif; fill: #e8eef2; }
h1 { margin: 0; font-size: 56px; line-height: 64px; }
.page { display: flex; gap: 25px; padding: 24px 147px 58px 148px; height: 704px; flex: none; }
.side { width: 300px; height: 622px; background: #f0f0f0; border-radius: 10px; padding: 63px 25px 0; box-shadow: 2px 5px 12px rgba(0, 0, 0, .08); }
.tool { margin-bottom: 69px; }
h3 { margin: 0 0 12px; font-size: 28px; line-height: 32px; letter-spacing: -.32px; color: #333; }
.tool button { height: 47px; padding: 0; font: 19px/22px "Liberation Sans", Arial, sans-serif; display: block; }
button { background: #0078d9; color: #fff; border: 0; border-radius: 6px; }
.chat { width: 1300px; height: 621px; margin-top: 1px; border: 1px solid #ddd; border-radius: 10px; background: #fff; display: flex; flex-direction: column; overflow: hidden; box-shadow: 0 5px 12px rgba(0, 0, 0, .1); }
h2 { margin: 0; height: 72px; flex: none; background: #0078d9; color: #fff; text-align: center; font-size: 42px; line-height: 71px; }
.log { flex: 1; padding: 18.500px 19px 0 18px; display: flex; flex-direction: column; gap: 18.750px; }
.msg { margin: 0; width: 971px; padding: 12.500px 13px; border-radius: 10px; font-size: 28px; line-height: 32px; letter-spacing: -.21px; }
.bot { background: #f0f0f0; color: #000; }
.user { background: #0078d9; color: #fff; align-self: flex-end; }
.compose { height: 82px; flex: none; background: #f9f9f9; padding: 12px 13px 13px 12px; display: flex; gap: 13px; }
.compose input { flex: 1; min-width: 0; border: 1px solid #ddd; border-radius: 5px; padding: 0 13px; font: 24.500px "Liberation Sans", Arial, sans-serif; letter-spacing: -.2px; background: #fff; }
.compose input::placeholder { color: #757575; }
.send { width: 106px; padding: 0; font: 24.500px "Liberation Sans", Arial, sans-serif; }
.mic { width: 83px; padding: 0; display: grid; place-items: center; }
.taskbar { height: 50px; display: flex; background: linear-gradient(90deg, #20363f 0%, #20343f 45%, #1e3140 75%, #1b2943 85%, #1b2943 100%); color: #fff; font-family: "Open Sans", "Noto Sans", sans-serif; }
.start { width: 60px; display: grid; place-items: center; }
.search { width: 360px; background: #f2f2f2; border: 1px solid #bbb; display: flex; align-items: center; padding-left: 14px; font-size: 18px; color: #2a2a2a; }
.glass { width: 22px; height: 22px; margin-right: 13px; margin-top: -2px; }
.racket { width: 68px; height: 46px; margin-left: auto; margin-right: 12px; }
.apps { display: flex; padding-left: 2px; }
.app { position: relative; width: 62px; height: 50px; display: grid; place-items: center; padding-right: 2px; }
.app:nth-child(1) { padding-right: 6px; }
.active { background: #4b6168; }
.active svg { width: 33px; height: 33px; }
.open::after, .active::after, .stacked::after { content: ""; position: absolute; bottom: 0; left: 5px; width: 51px; height: 3px; background: #76b9ed; }
.active::after { left: 0; width: 62px; }
.stacked::after { background: linear-gradient(90deg, #76b9ed 40px, #5a87ac 40px); }
.count { position: absolute; left: 36px; top: 24px; width: 20px; height: 20px; border: 1px solid #aaa; border-radius: 50%; background: #303438; font-size: 13px; line-height: 18px; text-align: center; }
.who { position: absolute; left: 27px; top: 25px; width: 18px; font: italic 700 6.500px/12px "Liberation Serif", serif; text-align: center; color: #6b1c4c; }
.tray { margin-left: auto; display: flex; align-items: center; font-size: 16.500px; }
.tray path { fill: none; stroke: #fff; stroke-width: 1.200; }
.tray .cell { fill: #fff; stroke: none; }
.sun { width: 30px; height: 26px; margin: -4px 1px 0 0; }
.tray .sun path { stroke: #ffe6c4; stroke-width: 2; }
.deg { width: 36px; margin-left: 11px; }
.sky { width: 40px; margin-left: 11px; }
.chev { width: 17px; height: 10px; margin-left: 30px; }
.wifi { width: 17px; height: 18px; margin-left: 14px; }
.meet { width: 16px; height: 19px; margin-left: 14px; }
.vol { width: 20px; height: 16px; margin-left: 9px; }
.bat { width: 20px; height: 16px; margin-left: 12px; }
.clock { width: 76px; margin-left: 13px; display: flex; flex-direction: column; align-items: center; font-size: 14.200px; line-height: 23px; }
.note { width: 20px; height: 20px; margin-left: 23px; }
.tray .note path:first-child { fill: #fff; stroke: none; }
.tray .note path:last-child { stroke: #1b2a42; }
.peek { width: 1px; height: 50px; background: #65708a; margin: 0 5px 0 25px; }
</style>
